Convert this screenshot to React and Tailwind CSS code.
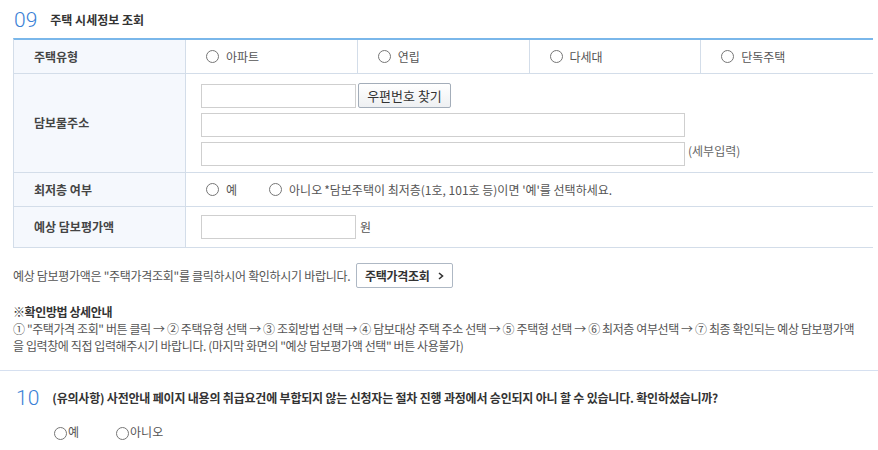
import React from "react";

const font = { fontFamily: '"Noto Sans CJK KR", "Noto Sans", sans-serif' };

const Radio = ({ label, className = "" }) => (
  <label className={`flex items-center ${className}`}>
    <span className="w-[13px] h-[13px] rounded-full border border-[#767676] bg-white shrink-0" />
    <span className="ml-[7px] text-[12px] text-[#555]">{label}</span>
  </label>
);

const Input = ({ className = "" }) => (
  <div className={`h-[24px] border border-[#cfcfcf] bg-white ${className}`} />
);

const Label = ({ children }) => (
  <div className="w-[172px] shrink-0 border-r border-[#d3dde9] bg-[#f5f8fd] flex items-center pl-[20px] text-[12px] font-bold text-[#444]">
    {children}
  </div>
);

const houseTypes = ["아파트", "연립", "다세대", "단독주택"];

export default function App() {
  return (
    <div className="w-[878px] h-[450px] bg-white overflow-hidden" style={font}>
      <div className="flex items-center h-[38px] pl-[14px] pt-[2px]">
        <span className="text-[21px] font-light text-[#3a7fd6] leading-none" style={{ fontFamily: "Roboto, sans-serif" }}>09</span>
        <span className="ml-[13px] text-[12px] font-bold text-[#333]">주택 시세정보 조회</span>
      </div>

      <div className="ml-[13px] w-[860px] border-t-2 border-t-[#7ab7ea] border-l border-[#d3dde9]">
        <div className="flex h-[34px] border-b border-[#d3dde9]">
          <Label>주택유형</Label>
          {houseTypes.map((t, i) => (
            <div
              key={t}
              className={`w-[172px] flex items-center pl-[20px] ${i < 3 ? "border-r border-[#d3dde9]" : ""}`}
            >
              <Radio label={t} />
            </div>
          ))}
        </div>

        <div className="flex h-[99px] border-b border-[#d3dde9]">
          <Label>담보물주소</Label>
          <div className="flex flex-col gap-[5px] pl-[15px] pt-[9px]">
            <div className="flex items-center">
              <Input className="w-[155px]" />
              <button className="ml-[2px] h-[25px] w-[93px] border border-[#a3adb9] rounded-[2px] bg-gradient-to-b from-white to-[#eef0f2] text-[13px] text-[#333] leading-none">
                우편번호 찾기
              </button>
            </div>
            <Input className="w-[484px]" />
            <div className="flex items-start">
              <Input className="w-[484px]" />
              <span className="ml-[3px] text-[12px] text-[#666] leading-[18px]">(세부입력)</span>
            </div>
          </div>
        </div>

        <div className="flex h-[34px] border-b border-[#d3dde9]">
          <Label>최저층 여부</Label>
          <div className="flex items-center pl-[20px]">
            <Radio label="예" />
            <Radio label="아니오" className="ml-[32px]" />
            <span className="ml-[2px] text-[12px] text-[#555]">
              *담보주택이 최저층(1호, 101호 등)이면 '예'를 선택하세요.
            </span>
          </div>
        </div>

        <div className="flex h-[41px] border-b border-[#d3dde9]">
          <Label>예상 담보평가액</Label>
          <div className="flex items-center pl-[15px]">
            <Input className="w-[155px]" />
            <span className="ml-[4px] text-[12px] text-[#555]">원</span>
          </div>
        </div>
      </div>

      <div className="flex items-center ml-[13px] mt-[15px]">
        <span className="text-[12px] text-[#555] tracking-[-0.3px]">
          예상 담보평가액은 "주택가격조회"를 클릭하시어 확인하시기 바랍니다.
        </span>
        <button className="ml-[6px] h-[25px] w-[97px] border border-[#aeb8c4] rounded-[2px] bg-white flex items-center justify-center gap-[9px] text-[12px] font-bold text-[#333] tracking-[-0.3px]">
          주택가격조회
          <svg width="6" height="8" viewBox="0 0 6 8">
            <path d="M1 1 L4.5 4 L1 7" fill="none" stroke="#333" strokeWidth="1.6" />
          </svg>
        </button>
      </div>

      <div className="ml-[13px] mt-[15px] text-[12px] leading-[17px] text-[#555] tracking-[-0.4px] whitespace-nowrap">
        <div className="font-bold text-[#333]">※확인방법 상세안내</div>
        <div>
          ① "주택가격 조회" 버튼 클릭 → ② 주택유형 선택 → ③ 조회방법 선택 → ④ 담보대상 주택 주소 선택 → ⑤ 주택형 선택 → ⑥ 최저층 여부선택 → ⑦ 최종 확인되는 예상 담보평가액
        </div>
        <div>을 입력창에 직접 입력해주시기 바랍니다. (마지막 화면의 "예상 담보평가액 선택" 버튼 사용불가)</div>
      </div>

      <div className="mt-[16px] border-t border-[#d6e0f0]" />

      <div className="flex items-center h-[26px] mt-[14px] pl-[16px]">
        <span className="text-[21px] font-light text-[#3a7fd6] leading-none" style={{ fontFamily: "Roboto, sans-serif" }}>10</span>
        <span className="ml-[13px] text-[12px] font-bold text-[#333] tracking-[-0.2px]">
          (유의사항) 사전안내 페이지 내용의 취급요건에 부합되지 않는 신청자는 절차 진행 과정에서 승인되지 아니 할 수 있습니다. 확인하셨습니까?
        </span>
      </div>

      <div className="flex items-end mt-[13px] pl-[54px] h-[16px]">
        <label className="flex items-start">
          <span className="w-[13px] h-[13px] rounded-full border border-[#767676] mt-[2px]" />
          <span className="ml-[1px] text-[12px] text-[#555] leading-[14px]">예</span>
        </label>
        <label className="flex items-start ml-[37px]">
          <span className="w-[13px] h-[13px] rounded-full border border-[#767676] mt-[2px]" />
          <span className="ml-[1px] text-[12px] text-[#555] leading-[14px]">아니오</span>
        </label>
      </div>
    </div>
  );
}
